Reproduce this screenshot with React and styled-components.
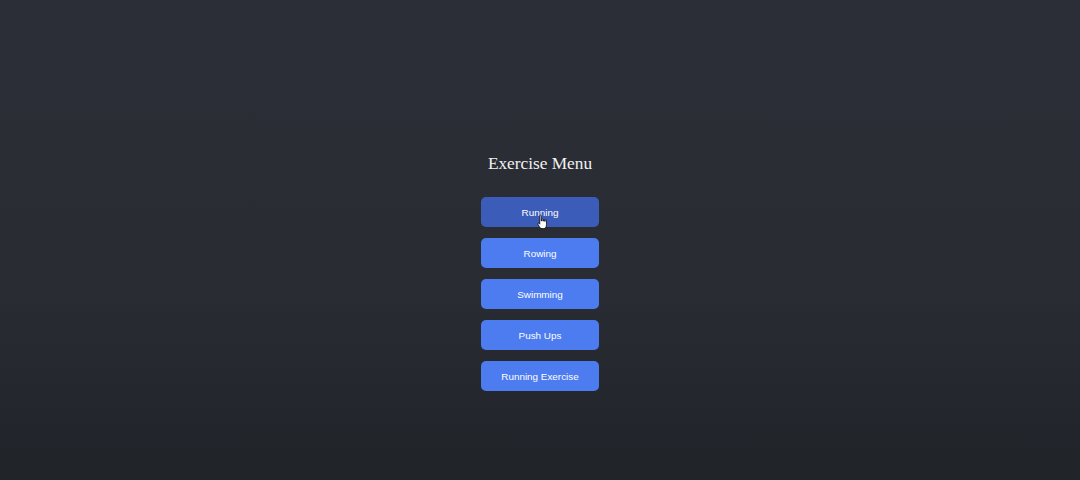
import React from 'react';
import styled, { createGlobalStyle } from 'styled-components';

const GlobalStyle = createGlobalStyle`
    html, body {
        margin: 0;
        padding: 0;
        height: 100%;
    }
    body {
        background: linear-gradient(to bottom, #2b2e36 0%, #292c33 60%, #202328 100%);
        font-family: "Liberation Sans", Arial, sans-serif;
    }
`;

const Page = styled.div`
    width: 1080px;
    height: 480px;
    display: flex;
    flex-direction: column;
    align-items: center;
    padding-top: 152px;
    box-sizing: border-box;
`;

const Title = styled.h2`
    font-family: "Liberation Serif", "Times New Roman", serif;
    font-weight: normal;
    font-size: 17.3px;
    color: #f2f2f2;
    margin: 0 0 21px 0;
    line-height: 24px;
`;

const Menu = styled.div`
    display: flex;
    flex-direction: column;
    gap: 11px;
`;

const MenuButton = styled.button`
    position: relative;
    width: 118px;
    height: 30px;
    border: none;
    border-radius: 5px;
    background-color: ${(props) => (props.$active ? '#3b5cb9' : '#4c7cf0')};
    color: #ffffff;
    font-family: "Liberation Sans", Arial, sans-serif;
    font-size: 9.9px;
    cursor: pointer;
    padding: 0;
`;

const Cursor = styled.svg`
    position: absolute;
    left: 56px;
    top: 17px;
    width: 11px;
    height: 16px;
    pointer-events: none;
`;

const items = ['Running', 'Rowing', 'Swimming', 'Push Ups', 'Running Exercise'];

function HandCursor() {
    return (
        <Cursor viewBox="0 0 10 14">
            <path
                d="M2.5 1.2 C2.5 0.5 3.8 0.5 3.8 1.2 L3.8 6 L4.2 6 L4.2 4.6 C4.2 4 5.4 4 5.4 4.6 L5.4 6.2 L5.8 6.2 L5.8 5 C5.8 4.4 7 4.4 7 5 L7 6.4 L7.4 6.4 L7.4 5.6 C7.4 5 8.6 5 8.6 5.6 L8.6 9.5 C8.6 11.5 7.6 13 6 13 L4.5 13 C3.3 13 2.8 12.3 2.2 11.4 L0.8 9 C0.4 8.3 1.2 7.6 1.8 8.2 L2.5 9 Z"
                fill="#ffffff"
                stroke="#000000"
                strokeWidth="0.7"
            />
        </Cursor>
    );
}

function App() {
    return (
        <>
            <GlobalStyle />
            <Page>
                <Title>Exercise Menu</Title>
                <Menu>
                    {items.map((item, i) => (
                        <MenuButton key={item} $active={i === 0}>
                            {item}
                            {i === 0 && <HandCursor />}
                        </MenuButton>
                    ))}
                </Menu>
            </Page>
        </>
    );
}

export default App;
